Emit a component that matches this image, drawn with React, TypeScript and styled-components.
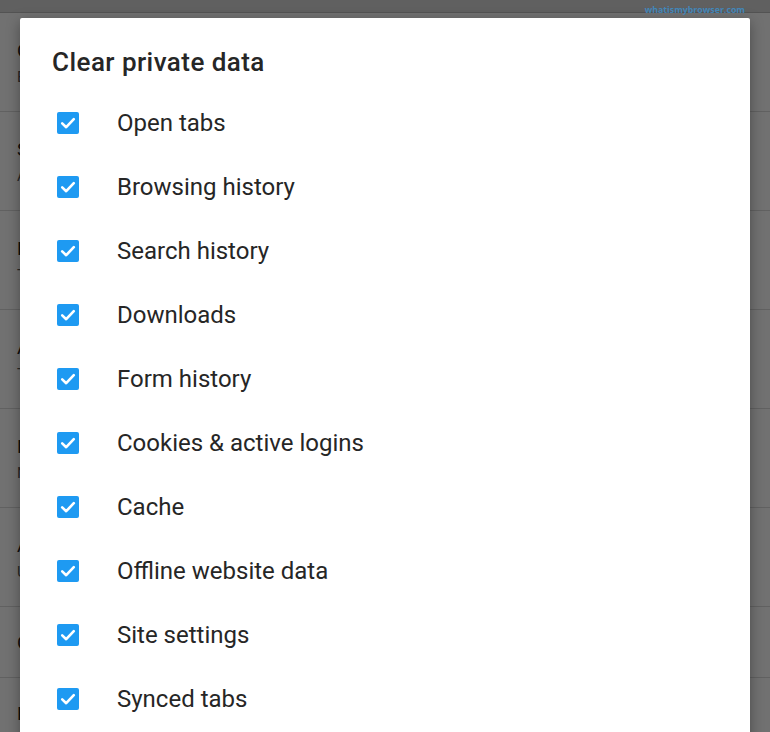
import React from 'react';
import styled, { createGlobalStyle } from 'styled-components';

const GlobalStyle = createGlobalStyle`
	html, body {
		margin: 0;
		padding: 0;
		background: #ffffff;
		font-family: Roboto, "Liberation Sans", sans-serif;
	}
	#root {
		width: 770px;
		height: 732px;
		overflow: hidden;
	}
`;

type SettingItem = { title: string; summary?: string };

const SETTINGS: SettingItem[] = [
	{ title: 'Cookies', summary: 'Enabled' },
	{ title: 'Saved logins', summary: 'Ask to save passwords' },
	{ title: 'Do not track', summary: 'Tell sites that you do not want to be tracked' },
	{ title: 'Allow autoplay', summary: 'Tap to change' },
	{ title: 'Master password', summary: 'Not set' },
	{ title: 'Allow usage data', summary: 'Used to improve features' },
	{ title: 'Clear private data' },
	{ title: 'Data choices' },
];

const PRIVATE_DATA: string[] = [
	'Open tabs',
	'Browsing history',
	'Search history',
	'Downloads',
	'Form history',
	'Cookies & active logins',
	'Cache',
	'Offline website data',
	'Site settings',
	'Synced tabs',
];

const Screen = styled.div`
	position: relative;
	width: 770px;
	height: 732px;
	overflow: hidden;
	background: #fafafa;
`;

const Toolbar = styled.div`
	height: 12px;
	background: #d6d6d6;
	border-bottom: 1px solid #b8b8b8;
`;

const SettingsList = styled.div`
	display: flex;
	flex-direction: column;
`;

const SettingRow = styled.div<{ $single?: boolean }>`
	display: flex;
	flex-direction: column;
	justify-content: center;
	gap: 6px;
	height: ${(p) => (p.$single ? 70 : 98)}px;
	padding-left: 17px;
	border-bottom: 1px solid #d8d8d8;
`;

const SettingTitle = styled.div`
	font-size: 19px;
	color: #222222;
`;

const SettingSummary = styled.div`
	font-size: 15px;
	color: #555555;
`;

const Scrim = styled.div`
	position: absolute;
	inset: 0;
	background: rgba(0, 0, 0, 0.55);
`;

const Watermark = styled.div`
	position: absolute;
	top: 4px;
	right: 25px;
	font-family: "Open Sans", "Liberation Sans", sans-serif;
	font-size: 8.8px;
	font-weight: 700;
	color: #3f8fca;
	opacity: 0.85;
`;

const Dialog = styled.div`
	position: absolute;
	top: 18px;
	left: 20px;
	width: 730px;
	bottom: -20px;
	background: #ffffff;
	border-radius: 2px;
	box-shadow: 0 4px 14px rgba(0, 0, 0, 0.35);
	padding: 28px 0 0 32px;
	box-sizing: border-box;
`;

const DialogTitle = styled.h2`
	margin: 0 0 13px;
	font-size: 26px;
	line-height: 32px;
	font-weight: 500;
	letter-spacing: 0.45px;
	color: #262626;
`;

const OptionList = styled.div`
	display: flex;
	flex-direction: column;
`;

const OptionRow = styled.label`
	display: flex;
	align-items: center;
	gap: 38px;
	height: 64px;
	padding-left: 5px;
`;

const CheckBox = styled.span`
	display: flex;
	align-items: center;
	justify-content: center;
	width: 22px;
	height: 22px;
	border-radius: 2px;
	background: #1e9af2;
	flex-shrink: 0;
`;

const OptionLabel = styled.span`
	font-size: 24px;
	color: #262626;
`;

const Check = () => (
	<svg width="22" height="22" viewBox="0 0 22 22">
		<path
			d="M5.2 11.4 L9.2 15.2 L16.8 7.2"
			fill="none"
			stroke="#ffffff"
			strokeWidth="2.6"
			strokeLinecap="round"
			strokeLinejoin="round"
		/>
	</svg>
);

const App: React.FC = () => {
	return (
		<>
			<GlobalStyle />
			<Screen>
				<Toolbar />
				<SettingsList>
					{SETTINGS.map((item) => (
						<SettingRow key={item.title} $single={!item.summary}>
							<SettingTitle>{item.title}</SettingTitle>
							{item.summary && <SettingSummary>{item.summary}</SettingSummary>}
						</SettingRow>
					))}
				</SettingsList>
				<Scrim />
				<Watermark>whatismybrowser.com</Watermark>
				<Dialog>
					<DialogTitle>Clear private data</DialogTitle>
					<OptionList>
						{PRIVATE_DATA.map((label) => (
							<OptionRow key={label}>
								<CheckBox>
									<Check />
								</CheckBox>
								<OptionLabel>{label}</OptionLabel>
							</OptionRow>
						))}
					</OptionList>
				</Dialog>
			</Screen>
		</>
	);
};

export default App;
